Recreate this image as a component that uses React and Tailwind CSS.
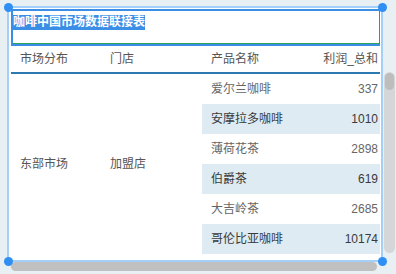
import React from 'react';

const rows = [
  { name: '爱尔兰咖啡', profit: 337 },
  { name: '安摩拉多咖啡', profit: 1010 },
  { name: '薄荷花茶', profit: 2898 },
  { name: '伯爵茶', profit: 619 },
  { name: '大吉岭茶', profit: 2685 },
  { name: '哥伦比亚咖啡', profit: 10174 },
];

// selection handle on the frame corners
const Dot = ({ className }) => (
  <span className={`absolute w-[9px] h-[9px] rounded-full bg-[#2f8ff2] ${className}`} />
);

export default function App() {
  return (
    <div
      className="w-[396px] h-[274px] bg-[#e9f0f4] overflow-hidden text-[12px]"
      style={{ fontFamily: '"Liberation Sans", "Noto Sans CJK SC", sans-serif' }}
    >
      <div className="flex pl-[7px] pt-[6px]">
        <div className="flex flex-col">
          <div className="relative w-[376px] h-[256px] border-2 border-[#a3cff9] bg-white">
            {/* title */}
            <div className="ml-[2px] mt-[1px] w-[369px] h-[37px] border-l-2 border-t-2 border-b-2 border-[#3a8ee6]">
              <div className="h-full border-r border-b border-[#2fa35c] pt-[2px]">
                <span className="inline-block h-[15px] leading-[15px] bg-[#3a8ee6] text-white font-bold">
                  咖啡中国市场数据联接表
                </span>
              </div>
            </div>

            {/* table */}
            <div className="ml-[2px] w-[369px]">
              <div className="grid grid-cols-[90px_101px_1fr_70px] h-[28px] items-center border-b-2 border-[#2b79b0] text-[#555]">
                <div className="pl-[9px]">市场分布</div>
                <div className="pl-[9px]">门店</div>
                <div className="pl-[9px]">产品名称</div>
                <div className="text-right pr-[2px]">利润_总和</div>
              </div>
              <div className="grid grid-cols-[90px_101px_1fr_70px] grid-rows-[repeat(6,30px)]">
                <div className="row-span-6 flex items-center pl-[9px] text-[#555]">东部市场</div>
                <div className="row-span-6 col-start-2 row-start-1 flex items-center pl-[9px] text-[#555]">加盟店</div>
                {rows.map((r, i) => (
                  <React.Fragment key={r.name}>
                    <div
                      className={`col-start-3 flex items-center pl-[9px] ${
                        i % 2 ? 'bg-[#deebf2] text-[#3a3a3a]' : 'text-[#666]'
                      }`}
                    >
                      {r.name}
                    </div>
                    <div
                      className={`col-start-4 flex items-center justify-end pr-[2px] ${
                        i % 2 ? 'bg-[#deebf2] text-[#3a3a3a]' : 'text-[#666]'
                      }`}
                    >
                      {r.profit}
                    </div>
                  </React.Fragment>
                ))}
              </div>
            </div>

            <Dot className="-left-[5px] -top-[5px]" />
            <Dot className="-right-[6px] -top-[5px]" />
            <Dot className="-left-[5px] -bottom-[6px]" />
            <Dot className="-right-[6px] -bottom-[6px]" />
          </div>
          {/* horizontal scrollbar */}
          <div className="ml-[4px] w-[366px] h-[9px] rounded-full bg-[#c0c0c0]" />
        </div>
        {/* vertical scrollbar */}
        <div className="ml-[1px] mt-[66px] w-[11px] h-[181px] rounded-full bg-[#d4d6d8] p-[1px]">
          <div className="h-[17px] rounded-full bg-[#bdbdbd]" />
        </div>
      </div>
    </div>
  );
}
